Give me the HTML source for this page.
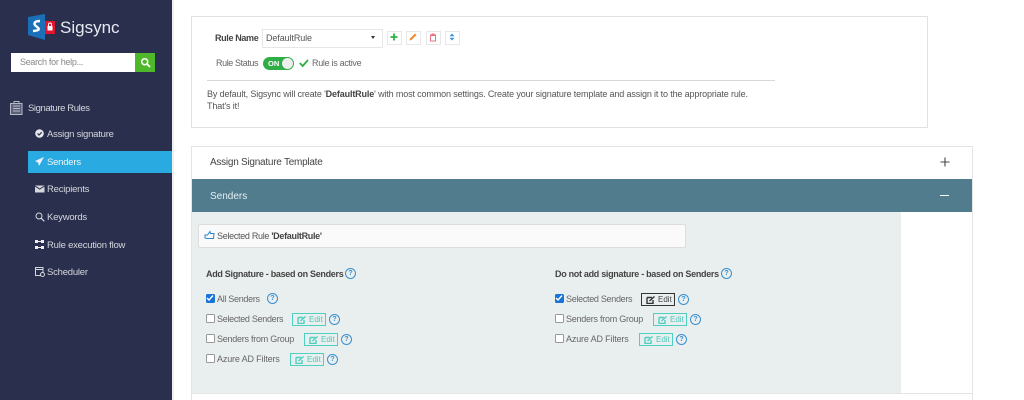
<!DOCTYPE html>
<html><head><meta charset="utf-8"><style>
html,body{margin:0;padding:0;width:1024px;height:400px;overflow:hidden;background:#fff}
body{position:relative;font-family:"Liberation Sans",sans-serif;font-size:9px;color:#555}
.a{position:absolute}
.t{position:absolute;white-space:nowrap;line-height:12px}
.n{color:#d5d7de;font-size:9.5px;letter-spacing:-.22px;left:47px}
.l{color:#666;font-size:9px;letter-spacing:-.3px}
.cb{position:absolute;width:7px;height:7px;border:1px solid #999;border-radius:1.5px;background:#fff}
.cb.on{background:#1a73d8;border-color:#1a73d8}
.e{position:absolute;width:32px;height:11px;border:1px solid #4fcfc0;font-size:8px;line-height:12px;color:#4fc7ba;text-align:left;text-indent:16px}
.e svg{position:absolute;left:4px;top:2px}
.q{position:absolute;width:9px;height:9px;border:1px solid #3a8fd0;border-radius:50%;color:#3a8fd0;font-size:7px;line-height:9px;text-align:center;font-weight:bold}
.b{position:absolute;top:31px;width:13px;height:12px;border:1px solid #e8e8e8;background:#fff}
</style></head><body>
<div class="a" style="left:0;top:0;width:172px;height:400px;background:#2a2f4d"></div>
<div class="a" style="left:172px;top:0;width:2px;height:400px;background:#f0f0f0"></div>

<svg class="a" style="left:27px;top:13px" width="30" height="28" viewBox="0 0 30 28">
<path d="M1 4 18 1V27L1 22Z" fill="#1a6fb8"/><path d="M13 8C7 8 6 11 9.500 13.500S13 17.500 6 18" stroke="#fff" stroke-width="2.400" fill="none"/>
<rect x="18" y="8" width="10" height="13" fill="#e3142d"/><rect x="20.500" y="13" width="5" height="4.500" fill="#fff"/><path d="M21.500 13V11.500a1.500 1.500 0 0 1 3 0V13" stroke="#fff" fill="none"/></svg>
<div class="t" style="left:60px;top:18px;font-size:17px;line-height:20px;color:#e8eaf0">Sigsync</div>

<div class="a" style="left:11px;top:53px;width:124px;height:19px;background:#fff"></div>
<div class="t" style="left:20px;top:56px;color:#888;font-size:9px;letter-spacing:-.3px">Search for help...</div>
<div class="a" style="left:135px;top:53px;width:20px;height:19px;background:#4fb82a"></div>
<svg class="a" style="left:140px;top:57px" width="11" height="11" viewBox="0 0 11 11"><circle cx="4.700" cy="4.700" r="3" stroke="#fff" stroke-width="1.500" fill="none"/><path d="M7 7l3 3" stroke="#fff" stroke-width="1.800"/></svg>

<svg class="a" style="left:10px;top:101px" width="13" height="14" viewBox="0 0 13 14"><rect x=".5" y="2.500" width="11.500" height="11" fill="#5b6078" stroke="#b5b8c5"/><rect x="4" y=".5" width="5" height="2" fill="none" stroke="#b5b8c5"/><path d="M3 5h7M3 7.500h7M3 10h7" stroke="#b5b8c5"/></svg>
<div class="t" style="left:28px;top:103px;font-size:9.500px;letter-spacing:-.4px;color:#d5d7de">Signature Rules</div>

<svg class="a" style="left:35px;top:129px" width="9" height="9" viewBox="0 0 9 9"><circle cx="4.500" cy="4.500" r="4.300" fill="#e6e7ec"/><path d="M2.500 4.500l1.500 1.500 2.700-2.700" stroke="#2a2f4d" stroke-width="1.200" fill="none"/></svg>
<div class="t n" style="top:129px">Assign signature</div>

<div class="a" style="left:28px;top:151px;width:144px;height:22px;background:#29abe2"></div>
<svg class="a" style="left:35px;top:157px" width="9" height="9" viewBox="0 0 9 9"><path d="M9 0 0 4l3 1.500L4 9Z" fill="#eef"/></svg>
<div class="t n" style="top:157px;color:#eef6fb">Senders</div>

<svg class="a" style="left:35px;top:185px" width="10" height="8" viewBox="0 0 10 8"><rect width="9.500" height="7" y=".5" fill="#d5d7de"/><path d="M0 1l4.700 3L9.500 1" stroke="#2a2f4d" fill="none"/></svg>
<div class="t n" style="top:184px">Recipients</div>

<svg class="a" style="left:35px;top:212px" width="10" height="10" viewBox="0 0 10 10"><circle cx="4" cy="4" r="3" stroke="#d5d7de" fill="none"/><path d="M6.300 6.300l3 3" stroke="#d5d7de" stroke-width="1.200"/></svg>
<div class="t n" style="top:212px">Keywords</div>

<svg class="a" style="left:35px;top:240px" width="9" height="9" viewBox="0 0 9 9"><path d="M0 0h3v3H0zM6 0h3v3H6zM0 6h3v3H0zM6 6h3v3H6z" fill="#eee"/><path d="M3 1.500h3M3 7.500h3" stroke="#eee"/></svg>
<div class="t n" style="top:240px">Rule execution flow</div>

<svg class="a" style="left:35px;top:267px" width="10" height="10" viewBox="0 0 10 10"><rect x=".5" y=".5" width="7.500" height="8" fill="none" stroke="#d5d7de"/><path d="M.5 2.500h7.500" stroke="#d5d7de"/><circle cx="7.500" cy="7.500" r="2" fill="#2a2f4d" stroke="#d5d7de"/></svg>
<div class="t n" style="top:267px">Scheduler</div>

<div class="a" style="left:191px;top:16px;width:735px;height:110px;border:1px solid #e2e2e2"></div>
<div class="t" style="left:215px;top:32px;font-weight:bold;color:#444;font-size:9px;letter-spacing:-.35px">Rule Name</div>
<div class="a" style="left:262px;top:29px;width:119px;height:17px;border:1px solid #e6e6e6"></div>
<div class="t" style="left:266px;top:32px;color:#555;font-size:9px;letter-spacing:-.1px">DefaultRule</div>
<div class="a" style="left:371px;top:36px;border-left:2.500px solid transparent;border-right:2.500px solid transparent;border-top:3px solid #333"></div>

<div class="b" style="left:387px"></div>
<svg class="a" style="left:390px;top:33px" width="8" height="8" viewBox="0 0 8 8"><path d="M4 .5v7M.5 4h7" stroke="#2fb344" stroke-width="1.800"/></svg>
<div class="b" style="left:406px"></div>
<svg class="a" style="left:408px;top:32px" width="10" height="10" viewBox="0 0 10 10"><path d="M1.500 8.500 2 6.500 7 1.500 8.500 3 3.500 8Z" fill="#f08a30"/></svg>
<div class="b" style="left:426px"></div>
<svg class="a" style="left:429px;top:33px" width="8" height="9" viewBox="0 0 8 9"><path d="M1 2h6M3 2V1h2v1M1.500 2.500h5V8h-5z" stroke="#e8707c" fill="none"/></svg>
<div class="b" style="left:445px"></div>
<svg class="a" style="left:448px;top:33px" width="8" height="8" viewBox="0 0 8 8"><path d="M4 .5 6.500 3.300h-5zM4 7.500 1.500 4.700h5z" fill="#3a8fe0"/></svg>

<div class="t" style="left:216px;top:57px;color:#666;font-size:9px;letter-spacing:-.4px">Rule Status</div>
<div class="a" style="left:263px;top:57px;width:31px;height:13px;background:#2fae48;border-radius:7px"></div>
<div class="t" style="left:268px;top:58px;color:#fff;font-size:7.500px;font-weight:bold">ON</div>
<div class="a" style="left:282px;top:58px;width:11px;height:11px;background:#eee;border-radius:50%"></div>
<svg class="a" style="left:299px;top:58px" width="10" height="10" viewBox="0 0 10 10"><path d="M.8 5 3.700 8 9 2" stroke="#2fae48" stroke-width="1.800" fill="none"/></svg>
<div class="t" style="left:312px;top:57px;color:#666;font-size:9px;letter-spacing:-.3px">Rule is active</div>
<div class="a" style="left:207px;top:80px;width:568px;height:1px;background:#d8d8d8"></div>
<div class="t" style="left:207px;top:88px;color:#555;font-size:9px;letter-spacing:-.14px">By default, Sigsync will create '<b style="color:#444">DefaultRule</b>' with most common settings. Create your signature template and assign it to the appropriate rule.</div>
<div class="t" style="left:207px;top:100px;color:#555;font-size:9px;letter-spacing:-.14px">That's it!</div>

<div class="a" style="left:191px;top:146px;width:780px;height:254px;border:1px solid #e4e4e4;border-bottom:0"></div>
<div class="t" style="left:210px;top:157px;font-size:10px;letter-spacing:-.25px;color:#444">Assign Signature Template</div>
<svg class="a" style="left:940px;top:157px" width="10" height="10" viewBox="0 0 10 10"><path d="M5 .5v9M.5 5h9" stroke="#444" stroke-width="1.100"/></svg>
<div class="a" style="left:192px;top:179px;width:780px;height:33px;background:#507c8e"></div>
<div class="t" style="left:210px;top:191px;font-size:10px;color:#e6eef1">Senders</div>
<div class="a" style="left:940px;top:195px;width:9px;height:1px;background:#fff"></div>

<div class="a" style="left:192px;top:212px;width:709px;height:181px;background:#e9efee"></div>
<div class="a" style="left:192px;top:393px;width:780px;height:1px;background:#e4e4e4"></div>

<div class="a" style="left:198px;top:224px;width:486px;height:22px;background:#fafafa;border:1px solid #ddd;border-radius:2px"></div>
<svg class="a" style="left:204px;top:230px" width="11" height="10" viewBox="0 0 11 10"><path d="M1 5h2.500L6 1.500 6.500 3.500H10L9.500 8.500H3.500L1 8Z" stroke="#2a85d0" fill="none"/></svg>
<div class="t" style="left:217px;top:230px;color:#555;font-size:9px;letter-spacing:-.3px">Selected Rule <b style="color:#444">'DefaultRule'</b></div>

<div class="t" style="left:206px;top:268px;font-weight:bold;color:#444;font-size:9px;letter-spacing:-.3px">Add Signature - based on Senders</div><div class="q" style="left:345px;top:268px">?</div>
<div class="cb on" style="left:206px;top:294px"></div>
<svg class="a" style="left:206px;top:294px" width="8" height="8" viewBox="0 0 8 8"><path d="M1 4l2 2 4-4.500" stroke="#fff" stroke-width="1.400" fill="none"/></svg>
<div class="t l" style="left:217px;top:293px">All Senders</div><div class="q" style="left:267px;top:293px">?</div>

<div class="cb" style="left:206px;top:314px"></div><div class="t l" style="left:217px;top:313px">Selected Senders</div>
<div class="e" style="left:292px;top:313px"><svg width="10" height="8" viewBox="0 0 10 8"><path d="M1 1.500h5M1 1.500V7.500H7V4M3.500 5 8.500.5" stroke="#4fcfc0" stroke-width="1.400" fill="none"/></svg>Edit</div><div class="q" style="left:329px;top:314px">?</div>

<div class="cb" style="left:206px;top:334px"></div><div class="t l" style="left:217px;top:333px;letter-spacing:-.25px">Senders from Group</div>
<div class="e" style="left:304px;top:333px"><svg width="10" height="8" viewBox="0 0 10 8"><path d="M1 1.500h5M1 1.500V7.500H7V4M3.500 5 8.500.5" stroke="#4fcfc0" stroke-width="1.400" fill="none"/></svg>Edit</div><div class="q" style="left:341px;top:334px">?</div>

<div class="cb" style="left:206px;top:354px"></div><div class="t l" style="left:217px;top:353px;letter-spacing:-.15px">Azure AD Filters</div>
<div class="e" style="left:290px;top:353px"><svg width="10" height="8" viewBox="0 0 10 8"><path d="M1 1.500h5M1 1.500V7.500H7V4M3.500 5 8.500.5" stroke="#4fcfc0" stroke-width="1.400" fill="none"/></svg>Edit</div><div class="q" style="left:327px;top:354px">?</div>

<div class="t" style="left:555px;top:268px;font-weight:bold;color:#444;font-size:9px;letter-spacing:-.3px">Do not add signature - based on Senders</div><div class="q" style="left:721px;top:268px">?</div>
<div class="cb on" style="left:555px;top:294px"></div>
<svg class="a" style="left:555px;top:294px" width="8" height="8" viewBox="0 0 8 8"><path d="M1 4l2 2 4-4.500" stroke="#fff" stroke-width="1.400" fill="none"/></svg>
<div class="t l" style="left:566px;top:293px">Selected Senders</div>
<div class="e" style="left:641px;top:293px;border-color:#333;color:#444"><svg width="10" height="8" viewBox="0 0 10 8"><path d="M1 1.500h5M1 1.500V7.500H7V4M3.500 5 8.500.5" stroke="#333" stroke-width="1.400" fill="none"/></svg>Edit</div><div class="q" style="left:678px;top:294px">?</div>

<div class="cb" style="left:555px;top:314px"></div><div class="t l" style="left:566px;top:313px;letter-spacing:-.25px">Senders from Group</div>
<div class="e" style="left:653px;top:313px"><svg width="10" height="8" viewBox="0 0 10 8"><path d="M1 1.500h5M1 1.500V7.500H7V4M3.500 5 8.500.5" stroke="#4fcfc0" stroke-width="1.400" fill="none"/></svg>Edit</div><div class="q" style="left:690px;top:314px">?</div>

<div class="cb" style="left:555px;top:334px"></div><div class="t l" style="left:566px;top:333px;letter-spacing:-.15px">Azure AD Filters</div>
<div class="e" style="left:639px;top:333px"><svg width="10" height="8" viewBox="0 0 10 8"><path d="M1 1.500h5M1 1.500V7.500H7V4M3.500 5 8.500.5" stroke="#4fcfc0" stroke-width="1.400" fill="none"/></svg>Edit</div><div class="q" style="left:676px;top:334px">?</div>
</body></html>
